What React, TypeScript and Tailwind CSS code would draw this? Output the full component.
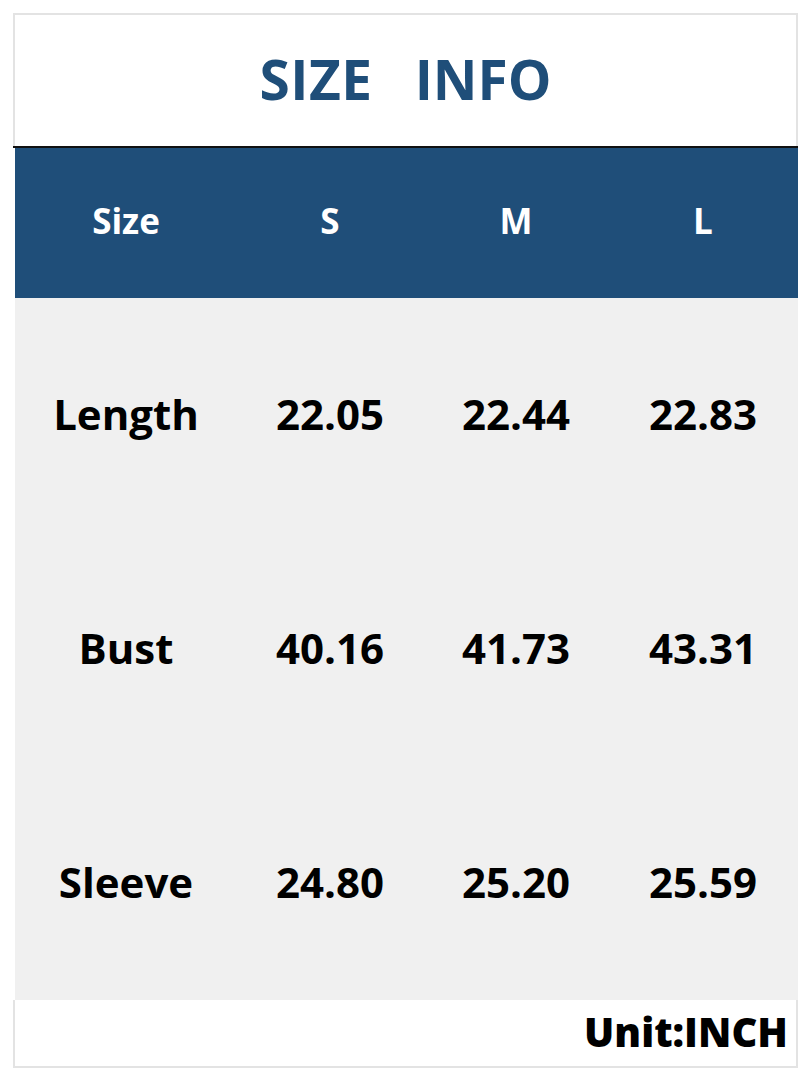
import React from "react";

const rows = [
  { label: "Length", vals: ["22.05", "22.44", "22.83"] },
  { label: "Bust", vals: ["40.16", "41.73", "43.31"] },
  { label: "Sleeve", vals: ["24.80", "25.20", "25.59"] },
];

export default function App() {
  return (
    <div
      className="w-[810px] h-[1080px] bg-white pt-[13px] pl-[13px]"
      style={{ fontFamily: '"Open Sans", "Noto Sans", sans-serif' }}
    >
      <div className="w-[785px] flex flex-col">
        <div className="h-[133px] pb-[4px] border-t-2 border-l-2 border-r-2 border-[#e3e3e3] flex items-center justify-center gap-[42px] text-[55px] font-bold text-[#1f4e79] leading-none">
          <span className="tracking-[0.5px]">SIZE</span>
          <span>INFO</span>
        </div>
        <div className="h-[2px] bg-[#111]" />
        <div className="pl-[2px] flex flex-col">
          <div className="h-[150px] pb-[6px] bg-[#1f4e79] grid grid-cols-[222px_186px_186px_188px] items-center text-white font-bold text-[35px] leading-none">
            <div className="text-center">Size</div>
            <div className="text-center">S</div>
            <div className="text-center">M</div>
            <div className="text-center">L</div>
          </div>
          <div className="bg-[#f0f0f0] flex flex-col">
            {rows.map((r) => (
              <div
                key={r.label}
                className="h-[234px] pb-[3px] grid grid-cols-[222px_186px_186px_188px] items-center text-black font-bold text-[42px] leading-none"
              >
                <div className="text-center">{r.label}</div>
                {r.vals.map((v) => (
                  <div key={v} className="text-center">
                    {v}
                  </div>
                ))}
              </div>
            ))}
          </div>
        </div>
        <div className="h-[68px] pb-[3px] border-l-2 border-r-2 border-b-2 border-[#e3e3e3] flex items-center justify-end pr-[8px]">
          <span className="text-[40px] font-extrabold text-black leading-none">Unit:INCH</span>
        </div>
      </div>
    </div>
  );
}
